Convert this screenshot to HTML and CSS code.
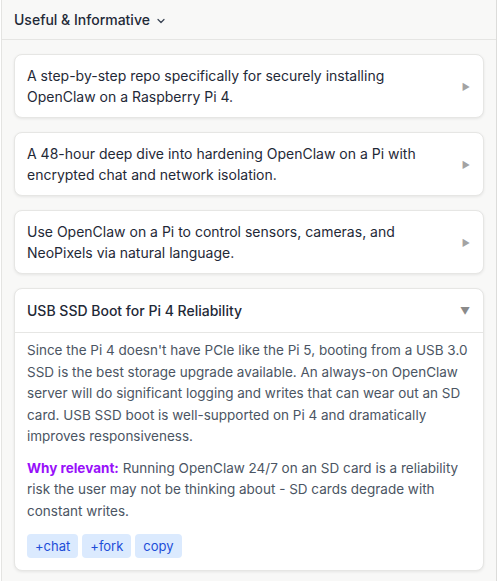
FILE: index.html
```html
<!DOCTYPE html>
<html lang="en">
<head>
    <meta charset="UTF-8">
    <meta name="viewport" content="width=device-width, initial-scale=1.0">
    <title>Useful &amp; Informative</title>
    <link rel="stylesheet" href="styles.css">
</head>
<body>
    <div class="panel">
        <div class="panel-head">
            <span class="panel-title">Useful &amp; Informative</span>
            <svg class="chevron" width="10" height="10" viewBox="0 0 10 10">
                <path d="M2 3.5 L5 6.5 L8 3.5" fill="none" stroke="#374151" stroke-width="1.2" stroke-linecap="round" stroke-linejoin="round"/>
            </svg>
        </div>

        <div class="list">
            <div class="card">
                <div class="card-row">
                    <span class="card-text">A step-by-step repo specifically for securely installing OpenClaw on a Raspberry Pi 4.</span>
                    <span class="toggle">&#9654;</span>
                </div>
            </div>

            <div class="card">
                <div class="card-row">
                    <span class="card-text">A 48-hour deep dive into hardening OpenClaw on a Pi with encrypted chat and network isolation.</span>
                    <span class="toggle">&#9654;</span>
                </div>
            </div>

            <div class="card">
                <div class="card-row">
                    <span class="card-text">Use OpenClaw on a Pi to control sensors, cameras, and NeoPixels via natural language.</span>
                    <span class="toggle">&#9654;</span>
                </div>
            </div>

            <div class="card open">
                <div class="card-row card-head">
                    <span class="card-title">USB SSD Boot for Pi 4 Reliability</span>
                    <span class="toggle down">&#9660;</span>
                </div>
                <div class="card-body">
                    <p>Since the Pi 4 doesn't have PCIe like the Pi 5, booting from a USB 3.0 SSD is the best storage upgrade available. An always-on OpenClaw server will do significant logging and writes that can wear out an SD card. USB SSD boot is well-supported on Pi 4 and dramatically improves responsiveness.</p>
                    <p><strong class="why">Why relevant:</strong> Running OpenClaw 24/7 on an SD card is a reliability risk the user may not be thinking about - SD cards degrade with constant writes.</p>
                    <div class="tags">
                        <button class="tag">+chat</button>
                        <button class="tag">+fork</button>
                        <button class="tag">copy</button>
                    </div>
                </div>
            </div>
        </div>
    </div>
</body>
</html>
```

FILE: styles.css
```css
body {
    margin: 0;
    font-family: 'Inter', 'Noto Sans', sans-serif;
    background: #ffffff;
    color: #1f2937;
}

.panel {
    width: 496px;
    margin-left: 1px;
    min-height: 581px;
    background: #f8f8f7;
    border-left: 1px solid #e4e4e2;
    border-right: 1px solid #dcdcda;
    box-sizing: border-box;
}

.panel-head {
    display: flex;
    align-items: center;
    gap: 6px;
    height: 40px;
    padding: 0 12px;
    border-bottom: 1px solid #e5e5e3;
    box-sizing: border-box;
}

.panel-title {
    font-size: 14px;
    font-weight: 500;
    color: #1f2937;
}

.chevron {
    margin-top: 2px;
}

.list {
    display: flex;
    flex-direction: column;
    gap: 14px;
    padding: 14px 12px;
}

.card {
    background: #ffffff;
    border: 1px solid #e6e6e4;
    border-radius: 8px;
    box-shadow: 0 1px 3px rgba(0, 0, 0, 0.08);
}

.card-row {
    display: flex;
    align-items: center;
    justify-content: space-between;
    padding: 10px 12px;
}

.card-text {
    font-size: 14px;
    line-height: 21px;
    color: #1f2937;
    max-width: 400px;
}

.card-head {
    padding: 11px 12px;
    border-bottom: 1px solid #e6e6e4;
}

.card-title {
    font-size: 14px;
    font-weight: 500;
    line-height: 21px;
    color: #1f2937;
}

.toggle {
    font-size: 9px;
    color: #a3a3a3;
    margin-right: 1px;
}

.toggle.down {
    font-size: 10px;
    color: #8a8a8a;
}

.card-body {
    padding: 7px 12px 12px;
}

.card-body p {
    margin: 0 0 10px;
    font-size: 13.5px;
    line-height: 21.5px;
    color: #4b5563;
}

.why {
    color: #9810fa;
    font-weight: 700;
}

.tags {
    display: flex;
    gap: 4px;
    margin-top: 12px;
}

.tag {
    font-family: inherit;
    font-size: 13px;
    height: 24px;
    padding: 0 8px;
    border: none;
    border-radius: 4px;
    background: #dbeafe;
    color: #1d4ed8;
    cursor: pointer;
}
```
